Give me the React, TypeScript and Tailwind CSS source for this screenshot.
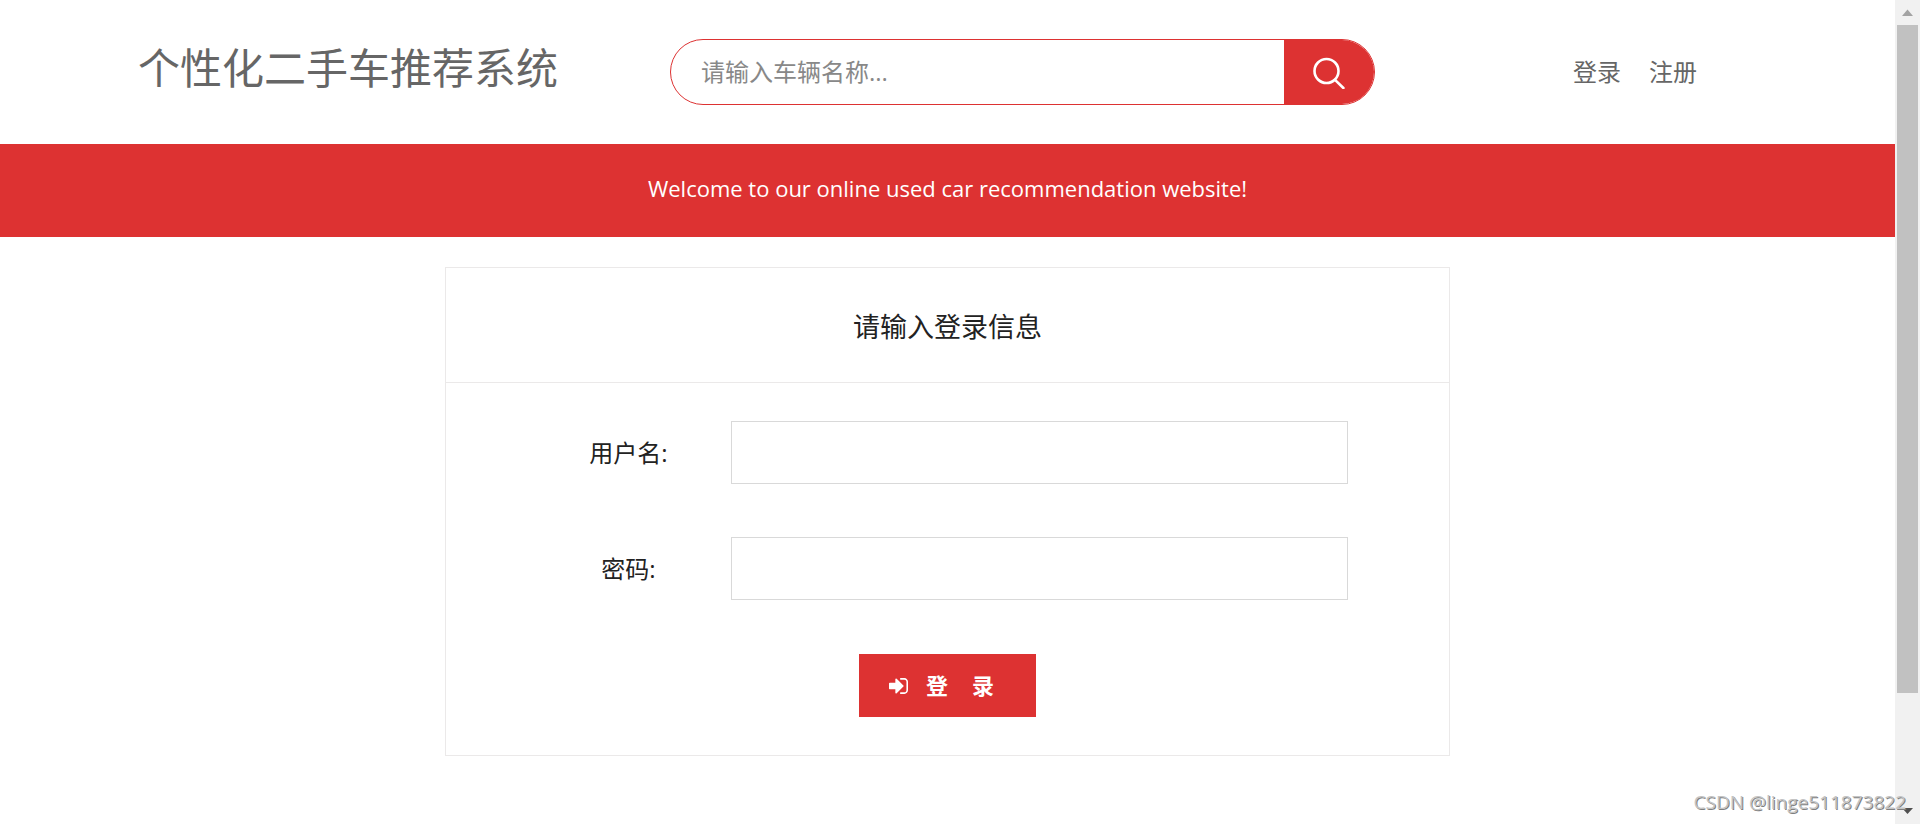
import { useState } from 'react';

interface FieldProps {
  id: string;
  label: string;
  type?: 'text' | 'password';
  value: string;
  onChange: (value: string) => void;
}

function SearchIcon() {
  return (
    <svg
      viewBox="0 0 32 32"
      className="w-8 h-8"
      fill="none"
      stroke="currentColor"
      strokeWidth="2.6"
      aria-hidden="true"
    >
      <circle cx="13.5" cy="14" r="12" />
      <path d="M22 22.9 30.4 31" strokeLinecap="round" />
    </svg>
  );
}

function SignInIcon() {
  return (
    <svg viewBox="0 256 1536 1280" className="w-[19px] h-4" fill="currentColor" aria-hidden="true">
      <path d="M1184 896q0 26-19 45l-544 544q-19 19-45 19t-45-19-19-45v-288h-448q-26 0-45-19t-19-45v-384q0-26 19-45t45-19h448v-288q0-26 19-45t45-19 45 19l544 544q19 19 19 45zm352-352v704q0 119-84.5 203.5t-203.5 84.5h-320q-13 0-22.5-9.5t-9.5-22.5q0-4-1-20t-.5-26.5 3-23.5 10-19.5 20.5-6.5h320q66 0 113-47t47-113v-704q0-66-47-113t-113-47h-312l-11.5-1-11.5-3-8-5.5-7-9-2-13.5q0-4-1-20t-.5-26.5 3-23.5 10-19.5 20.5-6.5h320q119 0 203.5 84.5t84.5 203.5z" />
    </svg>
  );
}

function Header() {
  const [keyword, setKeyword] = useState('');

  return (
    <header className="px-[138px] h-36 flex items-center text-2xl text-[#666]">
      <h1 className="w-[532px] shrink-0 pb-2 text-[42px] leading-[60px] whitespace-nowrap">
        个性化二手车推荐系统
      </h1>
      <form
        className="flex-1 max-w-[705px] h-[66px] flex rounded-full border border-[#dd3232] overflow-hidden"
        onSubmit={(e) => e.preventDefault()}
      >
        <input
          type="text"
          aria-label="请输入车辆名称"
          placeholder="请输入车辆名称..."
          value={keyword}
          onChange={(e) => setKeyword(e.target.value)}
          className="flex-1 min-w-0 pl-[30px] outline-none placeholder:text-[#888]"
        />
        <button
          type="submit"
          aria-label="搜索"
          className="w-[90px] pt-0.5 flex items-center justify-center bg-[#dd3232] text-white"
        >
          <SearchIcon />
        </button>
      </form>
      <nav className="ml-auto mr-[60px] flex gap-7 whitespace-nowrap">
        <a href="#login">登录</a>
        <a href="#register">注册</a>
      </nav>
    </header>
  );
}

function Field({ id, label, type = 'text', value, onChange }: FieldProps) {
  return (
    <div className="flex items-center">
      <label htmlFor={id} className="w-[205px] text-center text-2xl">
        {label}
      </label>
      <input
        id={id}
        type={type}
        value={value}
        onChange={(e) => onChange(e.target.value)}
        className="flex-1 min-w-0 h-[63px] px-5 text-2xl border border-[#d9d9d9] outline-none"
      />
    </div>
  );
}

function LoginCard() {
  const [username, setUsername] = useState('');
  const [password, setPassword] = useState('');

  return (
    <section className="w-full max-w-[1005px] mx-auto mt-[30px] border border-[#ebe9e9] text-[#222]">
      <h2 className="h-[115px] flex items-center justify-center pt-1 border-b border-[#ebe9e9] text-[27px]">
        请输入登录信息
      </h2>
      <form className="py-[38px]" onSubmit={(e) => e.preventDefault()}>
        <div className="pl-20 pr-[101px] flex flex-col gap-[53px]">
          <Field id="username" label="用户名:" value={username} onChange={setUsername} />
          <Field
            id="password"
            label="密码:"
            type="password"
            value={password}
            onChange={setPassword}
          />
        </div>
        <button
          type="submit"
          className="w-[177px] h-[63px] mt-[54px] mx-auto pl-[30px] flex items-center bg-[#dd3232] text-[22px] font-bold text-white"
        >
          <SignInIcon />
          <span className="ml-[18px] flex gap-6">
            <span>登</span>
            <span>录</span>
          </span>
        </button>
      </form>
    </section>
  );
}

function Scrollbar() {
  return (
    <aside
      aria-hidden="true"
      className="w-[25px] h-screen shrink-0 flex flex-col items-center bg-[#f1f1f1]"
    >
      <svg viewBox="0 0 25 25" className="w-[25px] h-[25px] shrink-0" fill="#a3a3a3">
        <path d="M12.5 9.5 18 16H7z" />
      </svg>
      <div className="flex-1 w-full px-0.5">
        <div className="h-19/22 bg-[#c1c1c1]" />
      </div>
      <svg viewBox="0 0 25 25" className="w-[25px] h-[25px] shrink-0" fill="#505050">
        <path d="M12.5 15 18 9H7z" />
      </svg>
    </aside>
  );
}

export default function App() {
  return (
    <div className="relative flex min-h-screen bg-white font-['Open_Sans','Noto_Sans_CJK_SC',sans-serif]">
      <div className="flex-1 min-w-0">
        <Header />
        <p className="h-[93px] pb-1 flex items-center justify-center bg-[#dd3232] text-[22px] text-white">
          Welcome to our online used car recommendation website!
        </p>
        <LoginCard />
      </div>
      <Scrollbar />
      <span className="absolute right-3.5 bottom-2 text-[19px] text-[#c4c4c4] [text-shadow:1px_1px_0_#808080]">
        CSDN @linge511873822
      </span>
    </div>
  );
}
